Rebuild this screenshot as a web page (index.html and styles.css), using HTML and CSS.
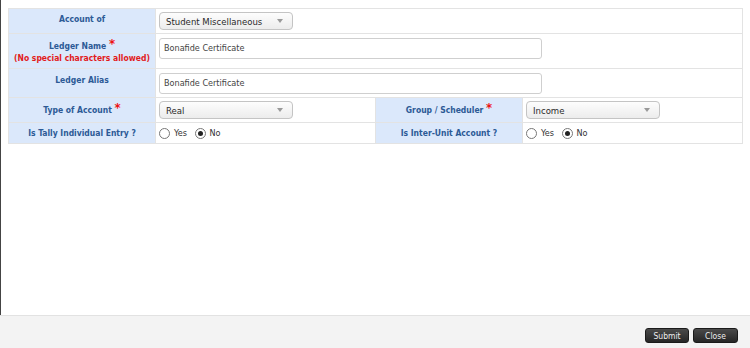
FILE: index.html
```html
<!DOCTYPE html>
<html lang="en">
<head>
  <meta charset="UTF-8"/>
  <title>Ledger</title>
  <link rel="stylesheet" href="styles.css">
</head>
<body>
  <div class="page">
    <main class="content">
      <table class="form-table">
        <colgroup>
          <col class="col-label"><col class="col-value"><col class="col-label"><col class="col-value">
        </colgroup>
        <tr class="row-1">
          <th>Account of</th>
          <td colspan="3">
            <div class="select"><span>Student Miscellaneous</span><i class="caret"></i></div>
          </td>
        </tr>
        <tr class="row-2">
          <th>
            <span class="lbl">Ledger Name <b class="req">*</b></span>
            <span class="hint">(No special characters allowed)</span>
          </th>
          <td colspan="3"><input class="text" type="text" value="Bonafide Certificate"></td>
        </tr>
        <tr class="row-3">
          <th>Ledger Alias</th>
          <td colspan="3"><input class="text" type="text" value="Bonafide Certificate"></td>
        </tr>
        <tr class="row-4">
          <th>Type of Account <b class="req">*</b></th>
          <td><div class="select"><span>Real</span><i class="caret"></i></div></td>
          <th>Group / Scheduler <b class="req">*</b></th>
          <td><div class="select"><span>Income</span><i class="caret"></i></div></td>
        </tr>
        <tr class="row-5">
          <th>Is Tally Individual Entry ?</th>
          <td>
            <label class="radio"><i class="dot"></i>Yes</label>
            <label class="radio"><i class="dot on"></i>No</label>
          </td>
          <th>Is Inter-Unit Account ?</th>
          <td>
            <label class="radio"><i class="dot"></i>Yes</label>
            <label class="radio"><i class="dot on"></i>No</label>
          </td>
        </tr>
      </table>
    </main>
    <footer class="footer">
      <button class="btn">Submit</button>
      <button class="btn">Close</button>
    </footer>
  </div>
</body>
</html>
```

FILE: styles.css
```css
/* ===== Global ===== */
* { margin: 0; padding: 0; box-sizing: border-box; }
body {
  font-family: 'DejaVu Sans Condensed', 'DejaVu Sans', sans-serif;
  font-stretch: condensed;
  font-size: 9px;
  background: #fff;
  width: 750px;
  height: 348px;
  overflow: hidden;
}
.page { display: flex; flex-direction: column; height: 348px; }

/* ===== Content ===== */
.content {
  flex: 1;
  border-left: 1px solid #444;
  padding: 8px 7px 0 7px;
}
.form-table {
  width: 734px;
  border-collapse: collapse;
  table-layout: fixed;
  border: 1px solid #e3e3e3;
}
.col-label { width: 147px; }
.col-value { width: 220px; }
.form-table th, .form-table td { border: 1px solid #e3e3e3; }
.form-table th {
  background: #dbe8fb;
  color: #2c5a96;
  font-weight: bold;
  text-align: center;
  vertical-align: top;
  padding-top: 5px;
  font-size: 8.5px;
  line-height: 11px;
}
.form-table td { padding: 0 3px; vertical-align: middle; }
.row-1 { height: 25px; }
.row-2 { height: 35px; }
.row-3 { height: 29px; }
.row-4 { height: 25px; }
.row-5 { height: 21px; }
.row-2 th { padding-top: 7px; }
.row-3 th { padding-top: 6px; }
.row-4 th { padding-top: 7px; }
.row-5 th { padding-top: 5px; }
.lbl, .hint { display: block; white-space: nowrap; }
.hint { color: #e21b1b; margin-top: 1px; }
.req { color: #ee1111; font-size: 13px; vertical-align: top; line-height: 8px; position: relative; top: -1px; }

/* ===== Controls ===== */
.select {
  width: 134px;
  height: 18px;
  border: 1px solid #c4c4c4;
  border-radius: 4px;
  background: linear-gradient(#fdfdfd, #ececec);
  display: flex;
  align-items: center;
  justify-content: space-between;
  padding: 0 9px 0 6px;
  color: #2a2a2a;
  font-size: 9.5px;
}
.caret {
  width: 0; height: 0;
  border-left: 3px solid transparent;
  border-right: 3px solid transparent;
  border-top: 4px solid #999;
}
.text {
  width: 383px;
  height: 21px;
  border: 1px solid #cfcfcf;
  border-radius: 3px;
  padding: 0 4px;
  font-family: 'DejaVu Sans Condensed', 'DejaVu Sans', sans-serif;
  font-stretch: condensed;
  font-size: 9px;
  color: #444;
  display: block;
}
.row-2 .text { margin-top: -6px; }
.radio {
  display: inline-flex;
  align-items: center;
  vertical-align: middle;
  color: #333;
  margin-right: 5px;
}
.dot {
  width: 11px; height: 11px;
  border: 1px solid #777;
  border-radius: 50%;
  background: #fff;
  margin-right: 4px;
  display: inline-flex;
  align-items: center;
  justify-content: center;
}
.dot.on::after { content: ""; width: 5px; height: 5px; border-radius: 50%; background: #222; }

/* ===== Footer ===== */
.footer {
  height: 33px;
  background: #f3f3f3;
  border-top: 1px solid #e2e2e2;
  display: flex;
  justify-content: flex-end;
  align-items: flex-start;
  gap: 4px;
  padding: 12px 12px 0 0;
}
.btn {
  height: 15px;
  padding: 0 6px;
  background: linear-gradient(#4a4a4a, #262626);
  color: #eee;
  border: 1px solid #1a1a1a;
  border-radius: 3px;
  font-family: 'DejaVu Sans Condensed', 'DejaVu Sans', sans-serif;
  font-stretch: condensed;
  font-size: 8.5px;
}
.btn:first-child { width: 44px; }
.btn:last-child { width: 45px; }
```
